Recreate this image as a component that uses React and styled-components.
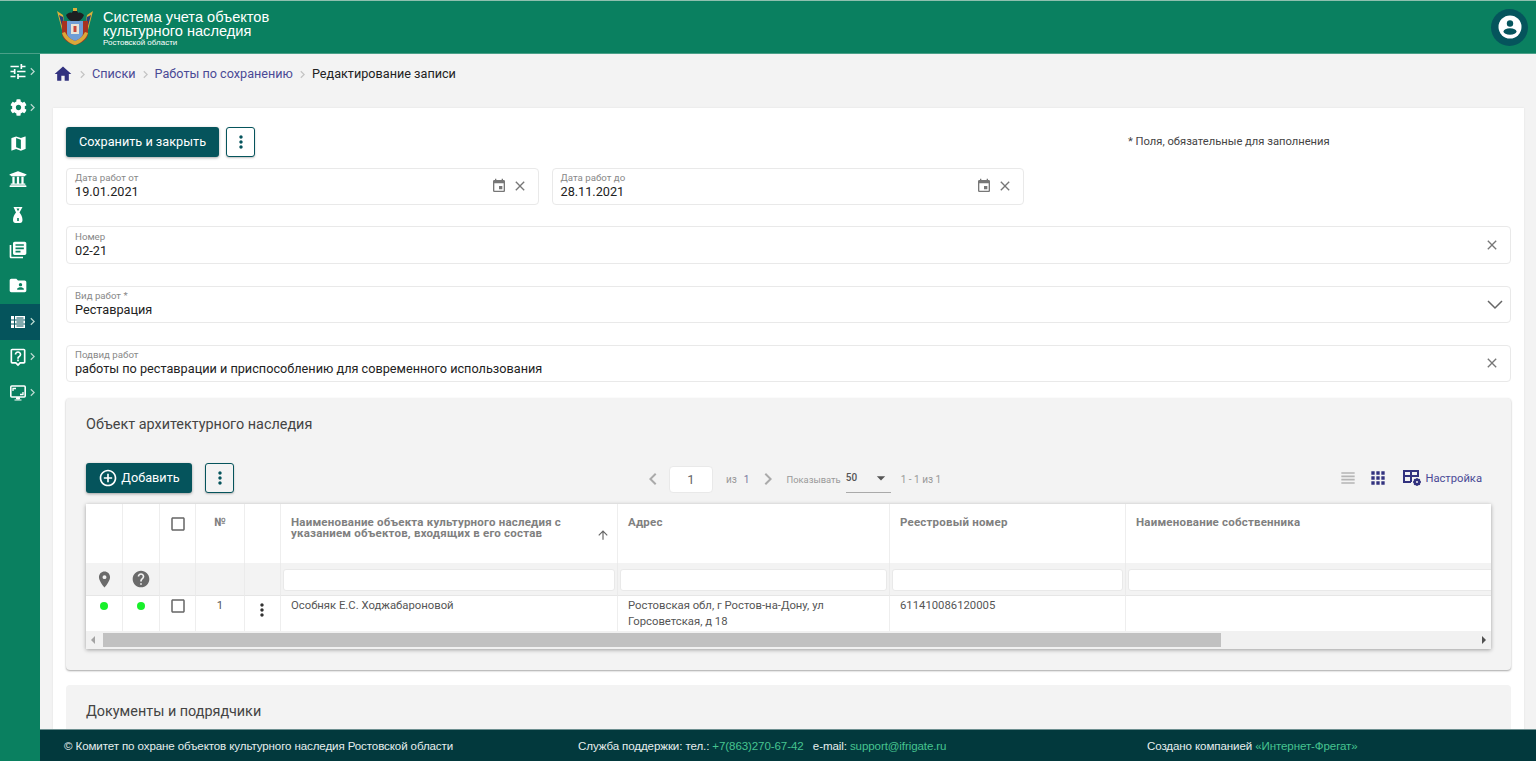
import React from 'react';
import styled, { createGlobalStyle } from 'styled-components';
import {
  MdTune, MdMap, MdLibraryBooks, MdFolderShared, MdOutlineLiveHelp, MdHome, MdChevronRight, MdChevronLeft,
  MdEvent, MdClose, MdHelp, MdPlace, MdAddCircleOutline, MdMoreVert, MdViewHeadline,
  MdApps, MdArrowUpward, MdArrowDropDown, MdCheckBoxOutlineBlank,
} from 'react-icons/md';
import { FaCog, FaUniversity } from 'react-icons/fa';

const GlobalStyle = createGlobalStyle`
  html, body { margin: 0; padding: 0; height: 100%; overflow: hidden; }
  body { font-family: Roboto, "Liberation Sans", sans-serif; color: #333; background: #f3f3f3; }
  #root { height: 100%; }
  * { box-sizing: border-box; }
`;

const Page = styled.div`
  height: 100vh;
  display: flex;
  flex-direction: column;
`;

const Header = styled.header`
  height: 54px;
  flex: none;
  background: #0a8060;
  border-top: 1px solid #8fbfae;
  border-bottom: 1px solid #4aa088;
  display: flex;
  align-items: center;
  padding: 0 8px 0 57px;
`;

const TitleBlock = styled.div`
  margin-left: 10px;
  color: #fff;
  font-family: "Liberation Sans", sans-serif;
  font-size: 14.6px;
  line-height: 14px;
  padding-top: 2px;
`;

const SubTitle = styled.div`
  font-size: 8px;
  line-height: 8px;
  margin-top: 1px;
`;

const Avatar = styled.div`
  margin-left: auto;
  width: 37px;
  height: 37px;
  border-radius: 50%;
  background: #05545c;
  display: flex;
  align-items: center;
  justify-content: center;
`;

const Body = styled.div`
  flex: 1;
  min-height: 0;
  display: flex;
`;

const Sidebar = styled.nav`
  width: 40px;
  flex: none;
  background: #0a8060;
`;

const SideItem = styled.div`
  height: 35.7px;
  position: relative;
  display: flex;
  align-items: center;
  padding-left: 8px;
  color: #fff;
  background: ${p => (p.$active ? '#05545c' : 'transparent')};
`;

const IconSlot = styled.span`
  width: 20px;
  display: flex;
  justify-content: center;
  flex: none;
`;

const SideArrow = styled(MdChevronRight)`
  position: absolute;
  right: 0;
  top: 50%;
  margin-top: -8px;
  color: #b9d8cf;
`;

const Main = styled.main`
  flex: 1;
  min-width: 0;
  display: flex;
  flex-direction: column;
`;

const Scroll = styled.div`
  flex: 1;
  min-height: 0;
  overflow: hidden;
  padding: 0 12px 0 13px;
`;

const Crumbs = styled.div`
  height: 54px;
  padding-top: 10px;
  display: flex;
  align-items: flex-start;
  font-size: 12.65px;
  line-height: 20px;
`;

const CrumbLink = styled.span`
  color: #4a4a96;
`;

const CrumbCurrent = styled.span`
  color: #222;
`;

const CrumbSep = styled(MdChevronRight)`
  color: #c4c4c4;
  margin: 3px 2px 0;
`;

const Card = styled.div`
  background: #fff;
  padding: 19px 13px 0;
  box-shadow: 0 0 2px rgba(0, 0, 0, 0.08);
`;

const Toolbar = styled.div`
  display: flex;
  align-items: center;
  height: 30px;
`;

const Note = styled.div`
  margin-left: 873px;
  margin-top: -2px;
  font-size: 11.2px;
  color: #444;
`;

const PrimaryButton = styled.button`
  height: 30px;
  width: ${p => p.$width}px;
  border: 0;
  border-radius: 3px;
  background: #05545c;
  color: #fff;
  font-family: inherit;
  font-size: 12.7px;
  display: flex;
  align-items: center;
  justify-content: center;
  gap: 3px;
  padding: 0 0 1px;
  box-shadow: 0 1px 3px rgba(0, 0, 0, 0.35);
`;

const MoreButton = styled.button`
  width: 29px;
  height: 30px;
  margin-left: ${p => p.$gap}px;
  padding: 0;
  border: 1px solid #05545c;
  border-radius: 3px;
  background: ${p => p.$bg || '#fff'};
  color: #05545c;
  display: flex;
  align-items: center;
  justify-content: center;
  box-shadow: 0 1px 2px rgba(0, 0, 0, 0.25);
`;

const FieldRow = styled.div`
  display: flex;
  gap: 12.5px;
  margin-top: ${p => p.$top}px;
`;

const Field = styled.div`
  flex: ${p => (p.$width ? 'none' : 1)};
  width: ${p => (p.$width ? `${p.$width}px` : 'auto')};
  height: ${p => p.$height || 37}px;
  border: 1px solid #e9e9e9;
  border-radius: 4px;
  background: #fff;
  padding: 0 8px 1px;
  display: flex;
  align-items: center;
`;

const FieldText = styled.div`
  flex: 1;
  min-width: 0;
`;

const FieldLabel = styled.div`
  font-size: 9.7px;
  line-height: 12px;
  color: #888;
`;

const FieldValue = styled.div`
  font-size: 12.7px;
  line-height: 16px;
  color: #222;
`;

const FieldIcons = styled.div`
  display: flex;
  align-items: center;
  gap: 5px;
  margin-right: ${p => p.$right}px;
  color: #777;
`;

const Section = styled.section`
  margin-top: ${p => p.$top}px;
  background: #f3f3f3;
  border-radius: 4px;
  padding: 18px 20px 21px;
  box-shadow: ${p => (p.$flat ? 'none' : '0 1px 2px rgba(0, 0, 0, 0.35)')};
`;

const SectionTitle = styled.h3`
  margin: 0;
  font-weight: 400;
  font-size: 14.4px;
  line-height: 18px;
  color: #444;
`;

const TableBar = styled.div`
  margin-top: 29px;
  height: 30px;
  display: flex;
  align-items: center;
  padding-right: 9px;
`;

const Pager = styled.div`
  margin-left: 407px;
  display: flex;
  align-items: center;
  font-size: 10px;
  color: #999;
  padding-top: 2px;
`;

const PagerArrow = styled.span`
  display: flex;
  color: #aaa;
  margin-left: ${p => p.$left}px;
`;

const PageInput = styled.div`
  width: 44px;
  height: 27px;
  margin-left: 4px;
  border: 1px solid #e9e9e9;
  border-radius: 4px;
  background: #fff;
  color: #666;
  font-size: 13px;
  display: flex;
  align-items: center;
  justify-content: center;
`;

const PagerText = styled.span`
  margin-left: ${p => p.$left}px;
  font-size: ${p => p.$size || 10}px;
  color: ${p => p.$color || '#999'};
`;

const PerPage = styled.div`
  margin-left: 5px;
  width: 45px;
  height: 27px;
  padding-bottom: 2px;
  border-bottom: 1px solid #aaa;
  display: flex;
  align-items: center;
  justify-content: space-between;
  color: #555;
  font-weight: 500;
`;

const ViewTools = styled.div`
  margin-left: auto;
  display: flex;
  align-items: center;
  color: #32327f;
  font-size: 11.2px;
`;

const ViewTool = styled.span`
  display: flex;
  margin-right: ${p => p.$right}px;
  color: ${p => p.$color || '#32327f'};
`;

const SettingsLabel = styled.span`
  color: #4a4a96;
`;

const TableBox = styled.div`
  margin-top: 11px;
  background: #fff;
  box-shadow: 0 1px 4px rgba(0, 0, 0, 0.35);
  overflow: hidden;
`;

const Grid = styled.div`
  display: grid;
  grid-template-columns: 37px 37px 36px 49px 36px 337px 272px 236px 1fr;
  grid-template-rows: 59px 33px 35px;
`;

const Cell = styled.div`
  border-right: ${p => (p.$last ? '0' : '1px solid #eeeeee')};
  font-size: 11.3px;
  line-height: 16px;
  padding: ${p => p.$pad || '2px 10px 0'};
  color: #555;
  background: #fff;
  text-align: ${p => (p.$center ? 'center' : 'left')};
  overflow: hidden;
`;

const HeadCell = styled(Cell)`
  padding-top: 13px;
  font-size: 11.5px;
  font-weight: 700;
  line-height: 11px;
  color: #808080;
  letter-spacing: 0.2px;
  display: ${p => (p.$sort ? 'flex' : 'block')};
`;

const SortIcon = styled(MdArrowUpward)`
  flex: none;
  margin: 11px -3px 0 7px;
  color: #666;
`;

const FilterCell = styled.div`
  background: #f3f3f3;
  border-right: ${p => (p.$last ? '0' : '1px solid #ebebeb')};
  border-bottom: 1px solid #e6e6e6;
  display: flex;
  align-items: center;
  justify-content: ${p => (p.$input ? 'flex-start' : 'center')};
  color: #6b6b6b;
  padding: ${p => (p.$input ? '0 2px' : '0')};
  padding-right: ${p => (p.$last ? '0' : '')};
  overflow: hidden;
`;

const FilterInput = styled.div`
  width: ${p => (p.$clipped ? 'calc(100% + 6px)' : '100%')};
  height: 22px;
  flex: none;
  background: #fff;
  border: 1px solid #e9e9e9;
  border-radius: 3px;
  margin-top: 1px;
`;

const Dot = styled.span`
  display: block;
  width: 8px;
  height: 8px;
  margin: 4px auto 0;
  border-radius: 50%;
  background: #18f02a;
`;

const CheckIcon = styled(MdCheckBoxOutlineBlank)`
  display: block;
  margin: ${p => p.$top}px auto 0;
  color: #666;
`;

const ScrollBar = styled.div`
  height: 18px;
  background: #f1f1f1;
  display: flex;
  align-items: center;
  justify-content: space-between;
  padding: 0 5px;
  color: #505050;
  position: relative;
`;

const ScrollArrow = styled.span`
  width: 0;
  height: 0;
  border-top: 4px solid transparent;
  border-bottom: 4px solid transparent;
  border-left: ${p => (p.$right ? '4px solid #505050' : '0')};
  border-right: ${p => (p.$right ? '0' : '4px solid #a3a3a3')};
`;

const ScrollThumb = styled.div`
  position: absolute;
  left: 17px;
  top: 2px;
  height: 14px;
  background: #c1c1c1;
`;

const Footer = styled.footer`
  height: 32px;
  flex: none;
  background: #02393d;
  border-top: 1px solid #6d8f90;
  color: #e6eeee;
  font-family: "Liberation Sans", sans-serif;
  font-size: 11.55px;
  display: grid;
  grid-template-columns: 514px 569px 1fr;
  align-items: center;
  padding: 0 0 0 24px;
  letter-spacing: -0.1px;
`;

const FooterLink = styled.span`
  color: #46c490;
`;

function FlaskIcon() {
  return (
    <svg width="20" height="20" viewBox="0 0 20 20">
      <path fill="#fff" d="M5.500 2h9l-3 5.500c1.500 1.800 3 4.500 3 7.500 0 2-1 3-2.500 3H7.500C6 18 5 17 5 15c0-3 1.500-5.700 3-7.500z" />
      <path fill="#0a8060" d="M8.500 3.500h3L10 6.200zM9.200 13h1.600v3H9.200z" />
    </svg>
  );
}

function ListIcon() {
  return (
    <svg width="20" height="20" viewBox="0 0 20 20">
      <path fill="#fff" d="M3 4h14v12H3z" />
      <path fill="none" stroke="#05545c" strokeWidth="1" d="M3 8h14M3 12h14M6.500 4v12M8.500 6h7M8.500 10h7M8.500 14h7" />
    </svg>
  );
}

function MonitorIcon() {
  return (
    <svg width="20" height="20" viewBox="0 0 20 20" fill="none" stroke="#fff">
      <rect x="2.800" y="3" width="14.400" height="11" rx="1" strokeWidth="1.600" />
      <path strokeWidth="1.300" d="M5 8V5.500h3M15 9v2.500h-3" />
      <path fill="#fff" strokeWidth="1" d="M8.500 14.500h3v1.500h-3zM6.500 17h7" />
    </svg>
  );
}

function SelectChevron() {
  return (
    <svg width="16" height="16" viewBox="0 0 16 16">
      <path fill="none" stroke="#666" strokeWidth="1.500" d="M1 5l7 7 7-7" />
    </svg>
  );
}

function TableGearIcon() {
  return (
    <svg width="20" height="18" viewBox="0 0 20 18">
      <path fill="none" stroke="#32327f" strokeWidth="2" d="M9 13H2V2h14v6M2 7h14M9 2v11" />
      <circle cx="15" cy="13" r="2.500" fill="none" stroke="#32327f" strokeWidth="2" />
      <path stroke="#32327f" strokeWidth="1.300" d="M15 9v8M11 13h8M12.200 10.200l5.600 5.600M17.800 10.200l-5.600 5.600" />
      <circle cx="15" cy="13" r="1" fill="#f3f3f3" />
    </svg>
  );
}

function Emblem() {
  return (
    <svg width="36" height="38" viewBox="0 0 36 38">
      <path fill="#d9b13a" d="M0 3l6 4 3 16-4-1zM36 3l-6 4-3 16 4-1z" />
      <path fill="#27407a" d="M2 7l4 2 2 11-3-2zM34 7l-4 2-2 11 3-2z" />
      <path fill="#a8321f" d="M5 13h26v12c0 6-6 10-13 12C11 35 5 31 5 25z" />
      <path fill="#d9a83a" d="M5 25c2 6 7 10 13 12 6-2 11-6 13-12l-3-1c-2 4-5 7-10 9-5-2-8-5-10-9z" />
      <path fill="#6f9ed6" d="M10 13h16v12c0 4-4 6-8 8-4-2-8-4-8-8z" />
      <path fill="#e9e4d6" d="M14 16h8v10h-8z" />
      <path fill="#c7463a" d="M16.500 18h3v6h-3z" />
      <path fill="#1d1f22" d="M18 2c-2 0-3 2-3 3-2-1-4 0-6 2 1 3 3 5 5 6h8c2-1 4-3 5-6-2-2-4-3-6-2 0-1-1-3-3-3z" />
      <path fill="#d9b13a" d="M16 0h4v3h-4z" />
    </svg>
  );
}

const sideItems = [
  { icon: <MdTune size={21} />, arrow: true },
  { icon: <FaCog size={17} />, arrow: true },
  { icon: <MdMap size={19} /> },
  { icon: <FaUniversity size={18} /> },
  { icon: <FlaskIcon /> },
  { icon: <MdLibraryBooks size={22} /> },
  { icon: <MdFolderShared size={21} /> },
  { icon: <ListIcon />, arrow: true, active: true },
  { icon: <MdOutlineLiveHelp size={20} />, arrow: true },
  { icon: <MonitorIcon />, arrow: true },
];

const columns = [
  'Наименование объекта культурного наследия с указанием объектов, входящих в его состав',
  'Адрес',
  'Реестровый номер',
  'Наименование собственника',
];

function ClearField({ label, value, height, width, calendar, select }) {
  return (
    <Field $height={height} $width={width}>
      <FieldText>
        <FieldLabel>{label}</FieldLabel>
        <FieldValue>{value}</FieldValue>
      </FieldText>
      <FieldIcons $right={select ? -1 : 2}>
        {calendar && <MdEvent size={16} />}
        {select ? <SelectChevron /> : <MdClose size={16} />}
      </FieldIcons>
    </Field>
  );
}

export default function App() {
  return (
    <Page>
      <GlobalStyle />
      <Header>
        <Emblem />
        <TitleBlock>
          Система учета объектов
          <br />
          культурного наследия
          <SubTitle>Ростовской области</SubTitle>
        </TitleBlock>
        <Avatar>
          <svg width="26" height="26" viewBox="0 0 26 26">
            <circle cx="13" cy="13" r="11.500" fill="#fff" />
            <circle cx="13" cy="9.500" r="3.200" fill="#05545c" />
            <ellipse cx="13" cy="17.500" rx="6.500" ry="3.200" fill="#05545c" />
          </svg>
        </Avatar>
      </Header>
      <Body>
        <Sidebar>
          {sideItems.map((item, i) => (
            <SideItem key={i} $active={item.active}>
              <IconSlot>{item.icon}</IconSlot>
              {item.arrow && <SideArrow size={15} />}
            </SideItem>
          ))}
        </Sidebar>
        <Main>
          <Scroll>
            <Crumbs>
              <MdHome size={20} color="#32327f" />
              <CrumbSep size={15} />
              <CrumbLink>Списки</CrumbLink>
              <CrumbSep size={15} />
              <CrumbLink>Работы по сохранению</CrumbLink>
              <CrumbSep size={15} />
              <CrumbCurrent>Редактирование записи</CrumbCurrent>
            </Crumbs>
            <Card>
              <Toolbar>
                <PrimaryButton $width={153}>Сохранить и закрыть</PrimaryButton>
                <MoreButton $gap={7}>
                  <MdMoreVert size={20} />
                </MoreButton>
                <Note>* Поля, обязательные для заполнения</Note>
              </Toolbar>
              <FieldRow $top={11}>
                <ClearField label="Дата работ от" value="19.01.2021" width={473} calendar />
                <ClearField label="Дата работ до" value="28.11.2021" width={472} calendar />
              </FieldRow>
              <FieldRow $top={21}>
                <ClearField label="Номер" value="02-21" height={38} />
              </FieldRow>
              <FieldRow $top={22}>
                <ClearField label="Вид работ *" value="Реставрация" select />
              </FieldRow>
              <FieldRow $top={22}>
                <ClearField label="Подвид работ" value="работы по реставрации и приспособлению для современного использования" />
              </FieldRow>
              <Section $top={16}>
                <SectionTitle>Объект архитектурного наследия</SectionTitle>
                <TableBar>
                  <PrimaryButton $width={106}>
                    <MdAddCircleOutline size={20} />
                    Добавить
                  </PrimaryButton>
                  <MoreButton $gap={13} $bg="#f3f3f3">
                    <MdMoreVert size={20} />
                  </MoreButton>
                  <Pager>
                    <PagerArrow $left={0}><MdChevronLeft size={24} /></PagerArrow>
                    <PageInput>1</PageInput>
                    <PagerText $left={13}>из</PagerText>
                    <PagerText $left={7} $color="#77779f">1</PagerText>
                    <PagerArrow $left={7}><MdChevronRight size={24} /></PagerArrow>
                    <PagerText $left={6} $size={9.4}>Показывать</PagerText>
                    <PerPage>
                      50
                      <MdArrowDropDown size={20} color="#555" />
                    </PerPage>
                    <PagerText $left={10}>1 - 1 из 1</PagerText>
                  </Pager>
                  <ViewTools>
                    <ViewTool $right={10} $color="#b5b5b5"><MdViewHeadline size={20} /></ViewTool>
                    <ViewTool $right={14}><MdApps size={20} /></ViewTool>
                    <ViewTool $right={3}><TableGearIcon /></ViewTool>
                    <SettingsLabel>Настройка</SettingsLabel>
                  </ViewTools>
                </TableBar>
                <TableBox>
                  <Grid>
                    <HeadCell />
                    <HeadCell />
                    <HeadCell $pad="11px 0 0">
                      <CheckIcon size={18} $top={-2} />
                    </HeadCell>
                    <HeadCell $center $pad="12px 0 0">№</HeadCell>
                    <HeadCell />
                    <HeadCell $sort>
                      <span>{columns[0]}</span>
                      <SortIcon size={14} />
                    </HeadCell>
                    <HeadCell>{columns[1]}</HeadCell>
                    <HeadCell>{columns[2]}</HeadCell>
                    <HeadCell $last>{columns[3]}</HeadCell>

                    <FilterCell><MdPlace size={19} /></FilterCell>
                    <FilterCell><MdHelp size={20} /></FilterCell>
                    <FilterCell />
                    <FilterCell />
                    <FilterCell />
                    <FilterCell $input><FilterInput /></FilterCell>
                    <FilterCell $input><FilterInput /></FilterCell>
                    <FilterCell $input><FilterInput /></FilterCell>
                    <FilterCell $input $last><FilterInput $clipped /></FilterCell>

                    <Cell $pad="2px 0 0"><Dot /></Cell>
                    <Cell $pad="2px 0 0"><Dot /></Cell>
                    <Cell $pad="0"><CheckIcon size={18} $top={1} /></Cell>
                    <Cell $center $pad="2px 0 0">1</Cell>
                    <Cell $pad="4px 0 0 7px"><MdMoreVert size={20} color="#333" /></Cell>
                    <Cell>Особняк Е.С. Ходжабароновой</Cell>
                    <Cell>Ростовская обл, г Ростов-на-Дону, ул Горсоветская, д 18</Cell>
                    <Cell>611410086120005</Cell>
                    <Cell $last />
                  </Grid>
                  <ScrollBar>
                    <ScrollArrow />
                    <ScrollThumb style={{ width: 1118 }} />
                    <ScrollArrow $right />
                  </ScrollBar>
                </TableBox>
              </Section>
              <Section $top={15} $flat>
                <SectionTitle>Документы и подрядчики</SectionTitle>
              </Section>
            </Card>
          </Scroll>
          <Footer>
            <span>© Комитет по охране объектов культурного наследия Ростовской области</span>
            <span>
              Служба поддержки: тел.: <FooterLink>+7(863)270-67-42</FooterLink>&nbsp;&nbsp; e-mail: <FooterLink>support@ifrigate.ru</FooterLink>
            </span>
            <span>
              Создано компанией <FooterLink>«Интернет-Фрегат»</FooterLink>
            </span>
          </Footer>
        </Main>
      </Body>
    </Page>
  );
}
